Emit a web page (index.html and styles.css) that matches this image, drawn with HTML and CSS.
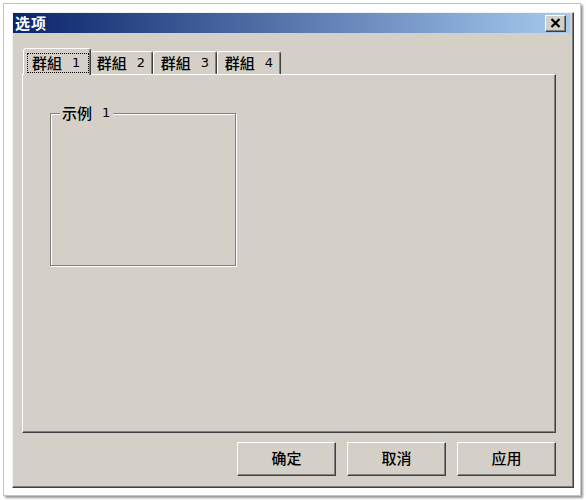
FILE: index.html
```html
<!DOCTYPE html>
<html lang="zh">
<head>
<meta charset="utf-8">
<title>选项</title>
<link rel="stylesheet" href="styles.css">
</head>
<body>
<div class="shot">
  <div class="dialog">
    <div class="titlebar">
      <span class="title">选项</span>
      <button class="close" aria-label="关闭">
        <svg width="11" height="10" viewBox="0 0 11 10"><path d="M1.5 1 L9.5 9 M9.5 1 L1.5 9" stroke="#000" stroke-width="2.2" fill="none"/></svg>
      </button>
    </div>
    <div class="body">
      <div class="tabs">
        <div class="tab selected"><span class="focus">群組<span class="num">1</span></span></div>
        <div class="tab">群組<span class="num">2</span></div>
        <div class="tab">群組<span class="num">3</span></div>
        <div class="tab">群組<span class="num">4</span></div>
      </div>
      <div class="panel">
        <div class="group">
          <span class="group-label">示例<span class="num">1</span></span>
        </div>
      </div>
      <div class="buttons">
        <button class="btn">确定</button>
        <button class="btn">取消</button>
        <button class="btn">应用</button>
      </div>
    </div>
  </div>
</div>
</body>
</html>
```
FILE: styles.css
```css
* { box-sizing: border-box; }
html, body { margin: 0; background: #fff; }
body {
  width: 586px;
  height: 500px;
  overflow: hidden;
  font-family: "Noto Sans CJK SC", sans-serif;
  font-size: 15px;
  font-weight: 500;
  color: #000;
}
.shot {
  margin: 3px;
  width: 578px;
  height: 493px;
  border: 1px solid #c4c4c4;
  padding: 8px 0 0 8px;
  box-shadow: 2px 2px 2px #9a9a9a;
  background: #fff;
}
.dialog {
  width: 562px;
  height: 476px;
  background: #d4d0c8;
  border: 1px solid;
  border-color: #f2f2f2 #404040 #404040 #f2f2f2;
  box-shadow: inset -1px -1px 0 #808080;
  padding: 0 3px 0 0;
  display: flex;
  flex-direction: column;
}
.titlebar {
  flex: none;
  height: 20px;
  background: linear-gradient(to right, #0a246a, #a6caf0);
  display: flex;
  align-items: center;
  justify-content: space-between;
  padding: 0 4px 0 2px;
}
.title {
  color: #fff;
  font-weight: bold;
  font-size: 15px;
  line-height: 20px;
  letter-spacing: 1px;
}
.close {
  width: 21px;
  height: 17px;
  padding: 0;
  background: #d4d0c8;
  border: 1px solid;
  border-color: #fff #404040 #404040 #fff;
  box-shadow: inset -1px -1px 0 #808080;
  display: flex;
  align-items: center;
  justify-content: center;
}
.close svg { display: block; }
.body {
  flex: 1;
  padding: 15px 14px 11px 9px;
  display: flex;
  flex-direction: column;
}
.tabs {
  flex: none;
  height: 26px;
  display: flex;
  align-items: flex-end;
  padding-left: 3px;
}
.tab {
  width: 64px;
  height: 23px;
  background: #d4d0c8;
  border: 1px solid;
  border-bottom: none;
  border-color: #fff #404040 transparent #fff;
  box-shadow: inset -1px 0 0 #808080;
  border-radius: 3px 3px 0 0;
  display: flex;
  align-items: center;
  justify-content: center;
  line-height: 18px;
  white-space: nowrap;
}
.tab.selected {
  width: 68px;
  height: 27px;
  margin: 0 -2px -1px;
  position: relative;
  z-index: 2;
  justify-content: flex-start;
  align-items: flex-start;
  padding: 4px 0 0 3px;
}
.focus {
  width: 62px;
  height: 20px;
  border: 1px dotted #000;
  padding-left: 4px;
  display: flex;
  align-items: center;
}
.num {
  font-family: "DejaVu Sans", sans-serif;
  font-size: 13px;
  font-weight: normal;
  margin-left: 10px;
}
.panel {
  flex: none;
  height: 359px;
  border: 1px solid;
  border-color: #fff #404040 #404040 #fff;
  box-shadow: inset -1px -1px 0 #808080;
  padding: 38px 0 0 27px;
}
.group {
  width: 186px;
  height: 153px;
  border: 1px solid #808080;
  box-shadow: inset 1px 1px 0 #fff, 1px 1px 0 #fff;
}
.group-label {
  display: inline-flex;
  align-items: center;
  height: 16px;
  margin: -9px 0 0 9px;
  padding: 0 3px 0 2px;
  background: #d4d0c8;
  line-height: 16px;
  vertical-align: top;
}
.buttons {
  flex: none;
  margin-top: 9px;
  display: flex;
  justify-content: flex-end;
  gap: 11px;
}
.btn {
  width: 99px;
  height: 34px;
  padding: 0 0 3px;
  background: #d4d0c8;
  border: 1px solid;
  border-color: #fff #404040 #404040 #fff;
  box-shadow: inset -1px -1px 0 #808080;
  font-family: "Noto Sans CJK SC", sans-serif;
  font-size: 15px;
  font-weight: 500;
  color: #000;
}
```
